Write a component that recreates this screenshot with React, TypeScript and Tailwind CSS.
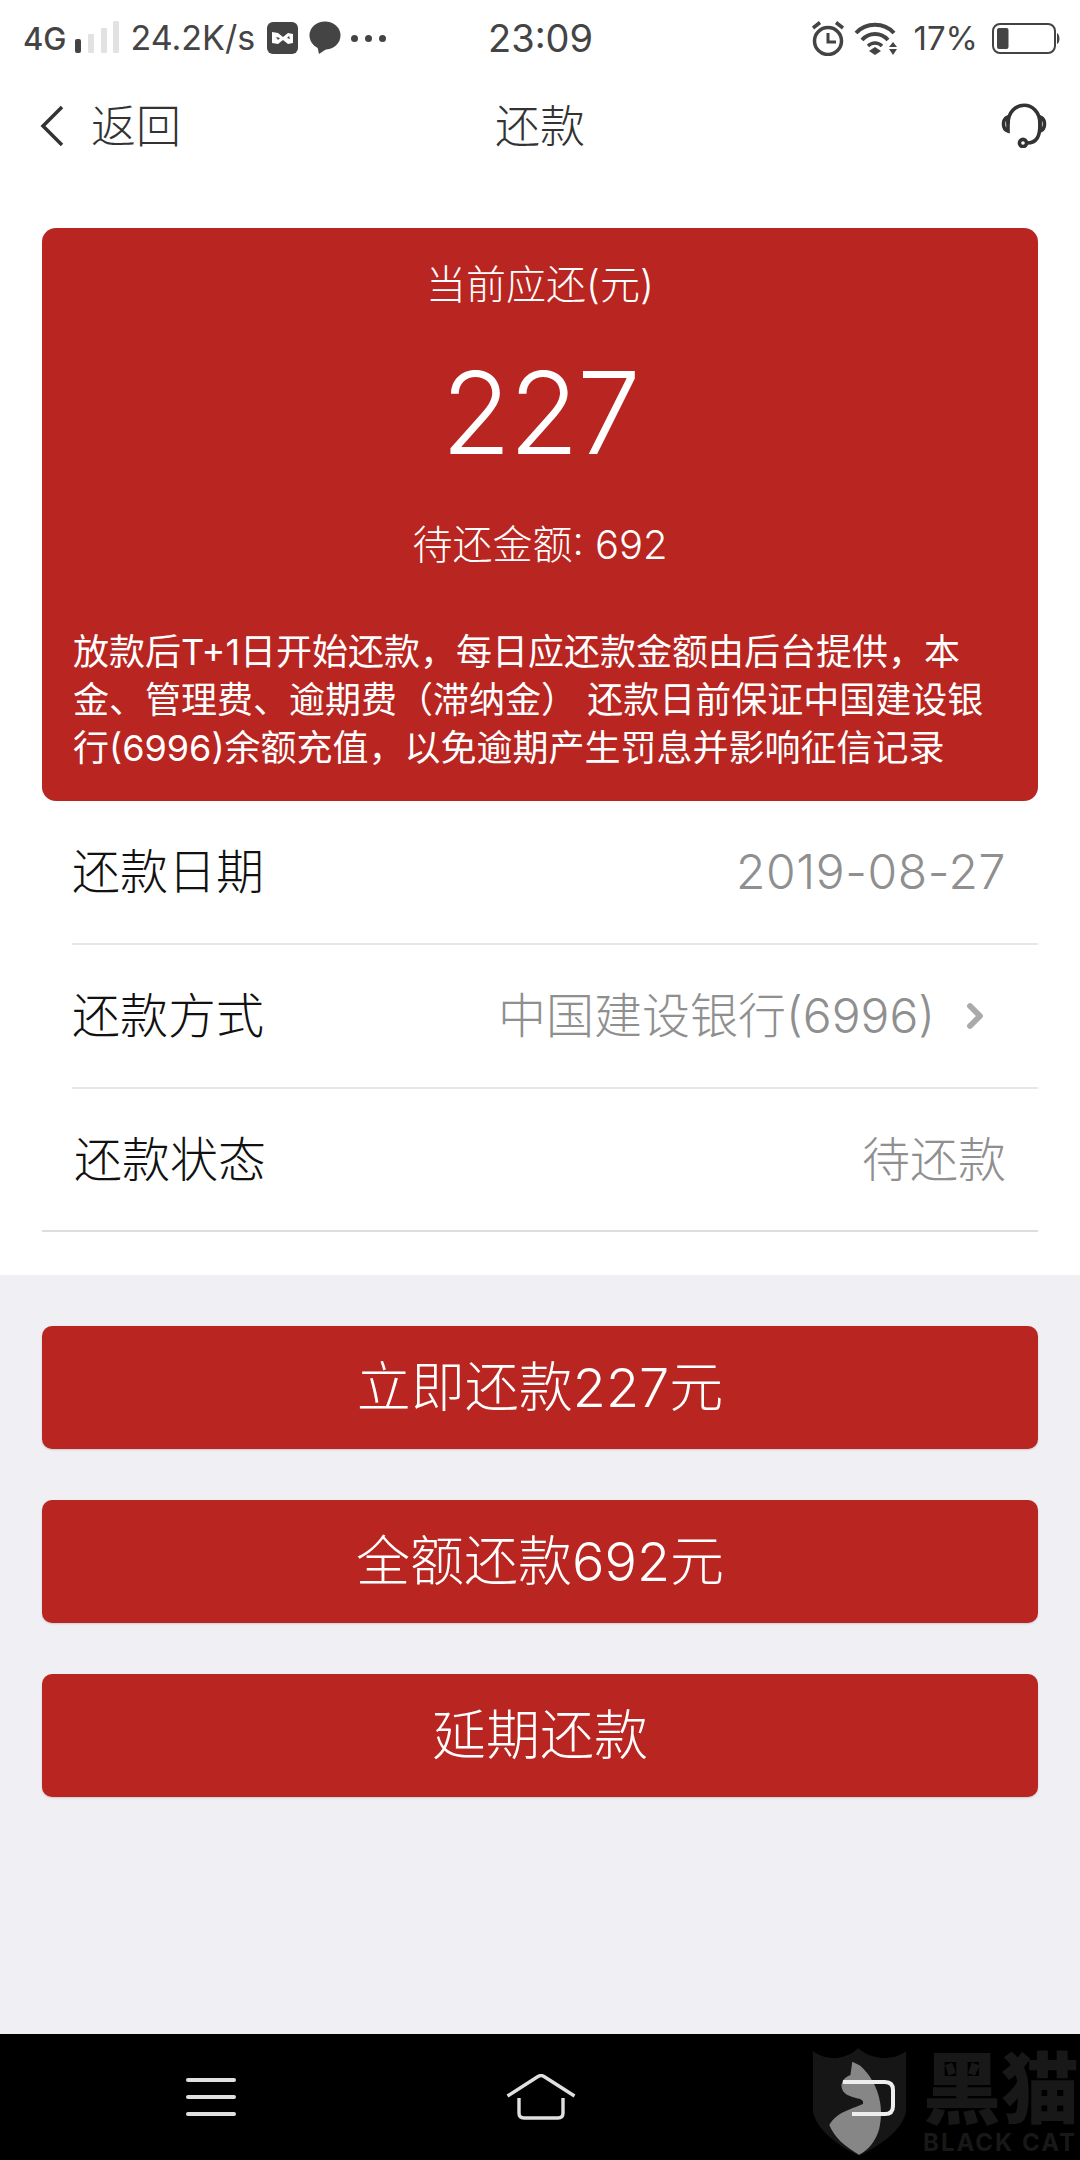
import { ChevronRight } from "lucide-react";

const FONT = "font-['Inter','Noto_Sans_CJK_SC',sans-serif]";

function StatusBar() {
  return (
    <div className="relative flex h-[76px] items-center justify-between pl-[23px] pr-[18px] text-[#444444]">
      <div className="flex items-center">
        <span className="text-[31px] font-medium leading-none">4G</span>
        <svg width="46" height="34" viewBox="0 0 46 34" className="ml-[7px] mb-[3px]">
          <rect x="1" y="19" width="6" height="14" rx="2" fill="#444444" />
          <rect x="14" y="14" width="6" height="19" rx="1" fill="#e2e2e2" />
          <rect x="27" y="8" width="6" height="25" rx="1" fill="#e2e2e2" />
          <rect x="39" y="1" width="6" height="32" rx="1" fill="#e2e2e2" />
        </svg>
        <span className="ml-[11px] text-[34px] leading-none">24.2K/s</span>
        <svg width="32" height="32" viewBox="0 0 32 32" className="ml-[12px]">
          <rect width="31" height="32" rx="6" fill="#444444" />
          <path d="M5 10 L11 11 L16 15 L21 11 L26 12 L26 21 L21 22 L16 18 L11 22 L5 21 Z" fill="#ffffff" />
          <path d="M9 15 L13 16 L11 18 Z M22 14 L23 17 L20 16 Z" fill="#444444" />
        </svg>
        <svg width="32" height="34" viewBox="0 0 32 34" className="ml-[10px]">
          <ellipse cx="16" cy="14.5" rx="15.5" ry="14" fill="#444444" />
          <path d="M8 24 L10 33 L19 27 Z" fill="#444444" />
        </svg>
        <div className="ml-[10px] flex gap-[7px]">
          <div className="h-[7px] w-[7px] rounded-full bg-[#444444]" />
          <div className="h-[7px] w-[7px] rounded-full bg-[#444444]" />
          <div className="h-[7px] w-[7px] rounded-full bg-[#444444]" />
        </div>
      </div>
      <span className="absolute left-[488px] top-[19px] text-[38px] leading-none">23:09</span>
      <div className="flex items-center">
        <svg width="34" height="36" viewBox="0 0 34 36" fill="none" stroke="#444444" className="mr-[9px]">
          <circle cx="17" cy="21" r="13.5" strokeWidth="3.5" />
          <path d="M17 13 V22 H25" strokeWidth="3" />
          <path d="M2 8 L9 2.5 M32 8 L25 2.5" strokeWidth="3.5" />
        </svg>
        <svg width="46" height="36" viewBox="0 0 46 36" fill="none" stroke="#444444" className="mr-[13px]">
          <path d="M2 13 C12 2 30 2 40 13" strokeWidth="4" />
          <path d="M8 20 C15 12 27 12 34 20" strokeWidth="4" />
          <path d="M14 26 C18 22 24 22 28 26" strokeWidth="3.5" />
          <path d="M15 31 L21 27 L27 31 L21 35 Z" fill="#444444" stroke="none" />
          <path d="M39 22 L43 27 H35 Z M35 29 H43 L39 35 Z" fill="#444444" stroke="none" />
        </svg>
        <span className="mr-[14px] text-[33px] leading-none">17%</span>
        <svg width="70" height="31" viewBox="0 0 70 31" fill="none">
          <rect x="1" y="1" width="62" height="29" rx="7" stroke="#444444" strokeWidth="2" />
          <rect x="5" y="5" width="11.5" height="21" rx="2" fill="#444444" />
          <path d="M65 10 C68 11 68.5 20 65 21 Z" fill="#444444" />
        </svg>
      </div>
    </div>
  );
}

function NavBar() {
  return (
    <div className="relative flex h-[100px] items-center justify-between pl-[40px] pr-[33px] text-[#333333]">
      <div className="flex items-center">
        <svg width="24" height="42" viewBox="0 0 24 42" fill="none" stroke="#333333" strokeWidth="3.5">
          <path d="M22 2 L3 21 L22 40" />
        </svg>
        <span className="ml-[27px] text-[45px] font-light leading-none">返回</span>
      </div>
      <span className="absolute left-0 right-0 text-center text-[45px] font-light leading-none">还款</span>
      <svg width="46" height="46" viewBox="0 0 46 46" fill="none" stroke="#333333" strokeWidth="3.6" className="mb-[3px]">
        <path d="M7 22 C7 -3 39 -3 39 22 C39 34 36 41 26 41" />
        <circle cx="22" cy="41" r="3.6" />
        <path d="M7 15 C1 17 1 27 7 29 Z" />
        <path d="M39 15 C45 17 45 27 39 29 Z" />
      </svg>
    </div>
  );
}

function InfoRow({
  label,
  value,
  chevron,
  last,
  wide,
}: {
  label: string;
  value: string;
  chevron?: boolean;
  last?: boolean;
  wide?: boolean;
}) {
  return (
    <div
      className={
        last
          ? "ml-[42px] mr-[42px] flex h-[143px] items-center justify-between border-b-2 border-[#dddddd] pl-[32px] pr-[32px]"
          : "ml-[72px] mr-[42px] flex h-[144px] items-center justify-between border-b-2 border-[#e6e6e6] pr-[32px]"
      }
    >
      <span className="text-[48px] font-light leading-none text-[#111111]">{label}</span>
      <div className="flex items-center">
        <span
          className={
            wide
              ? "text-[48px] font-light leading-none tracking-[0.6px] text-[#8f8f8f]"
              : "text-[48px] font-light leading-none text-[#8f8f8f]"
          }
        >
          {value}
        </span>
        {chevron && (
          <ChevronRight className="ml-[20px] mr-[11px] h-[40px] w-[40px] text-[#aaaaaa]" strokeWidth={3.5} />
        )}
      </div>
    </div>
  );
}

function ActionButton({ children }: { children: string }) {
  return (
    <button className="flex h-[123px] w-full items-center justify-center rounded-[10px] bg-[#b92520] text-[54px] font-light leading-none text-white shadow-[0_1px_2px_rgba(0,0,0,0.15)]">
      {children}
    </button>
  );
}

function Watermark() {
  return (
    <div className="absolute left-[812px] top-[2047px] flex whitespace-nowrap">
      <svg width="96" height="110" viewBox="0 0 100 112" className="shrink-0">
        <path d="M1 3 C15 14 35 12 48 0 C62 12 84 14 98 3 V66 C94 86 70 102 49 112 C28 102 5 86 1 66 Z" fill="#161616" />
        <path d="M42 14 L50 18 C68 34 76 60 70 84 C66 98 58 106 49 111 C34 102 24 94 18 80 C26 66 40 64 53 58 C56 50 38 54 32 44 C28 36 34 30 40 28 Z" fill="#868686" />
      </svg>
      <div className="ml-[15px] flex flex-col items-start pt-[3px] text-[#181818]">
        <span className="text-[78px] font-black leading-[80px]">黑猫</span>
        <span className="text-[24px] font-bold leading-[26px] tracking-[2px]">BLACK CAT</span>
      </div>
    </div>
  );
}

export default function App() {
  return (
    <div className={`relative flex h-[2160px] w-[1080px] flex-col overflow-hidden bg-[#efeff4] ${FONT}`}>
      <div className="h-[1275px] bg-white">
        <StatusBar />
        <NavBar />
        <div className="mx-[42px] mt-[52px] h-[573px] rounded-[14px] bg-[#b92520] text-white">
          <p className="pt-[34px] text-center text-[40px] font-light leading-[46px]">当前应还(元)</p>
          <p className="mt-[40px] text-center text-[114px] font-light leading-[130px] tracking-[-2px]">227</p>
          <p className="mt-[44px] text-center text-[40px] font-light leading-[46px]">待还金额: 692</p>
          <p className="mt-[60px] pl-[31px] pr-[30px] text-[36px] font-normal leading-[48px]">
            放款后T+1日开始还款，每日应还款金额由后台提供，本金、管理费、逾期费（滞纳金） 还款日前保证中国建设银行(6996)余额充值，以免逾期产生罚息并影响征信记录
          </p>
        </div>
        <InfoRow label="还款日期" value="2019-08-27" wide />
        <InfoRow label="还款方式" value="中国建设银行(6996)" chevron />
        <InfoRow label="还款状态" value="待还款" last />
      </div>
      <div className="flex flex-col gap-[51px] px-[42px] pt-[51px]">
        <ActionButton>立即还款227元</ActionButton>
        <ActionButton>全额还款692元</ActionButton>
        <ActionButton>延期还款</ActionButton>
      </div>
      <div className="relative mt-auto flex h-[126px] items-center bg-black">
        <div className="ml-[186px] flex w-[50px] flex-col gap-[13px]">
          <div className="h-[4px] rounded-full bg-[#e0e0e0]" />
          <div className="h-[4px] rounded-full bg-[#e0e0e0]" />
          <div className="h-[4px] rounded-full bg-[#e0e0e0]" />
        </div>
        <svg width="70" height="46" viewBox="0 0 70 46" fill="none" stroke="#e0e0e0" strokeWidth="3.4" className="ml-[270px]">
          <path d="M1.5 22 L32 2.5 Q35 0.5 38 2.5 L68.5 22" />
          <path d="M13 24 V39 Q13 44 18 44 H52 Q57 44 57 39 V24" />
        </svg>
      </div>
      <Watermark />
      <svg width="52" height="36" viewBox="0 0 52 36" fill="none" stroke="#eeeeee" strokeWidth="4" className="absolute left-[843px] top-[2080px]">
        <path d="M0 2 H42 Q50 2 50 10 V26 Q50 34 42 34 H9" />
      </svg>
    </div>
  );
}
